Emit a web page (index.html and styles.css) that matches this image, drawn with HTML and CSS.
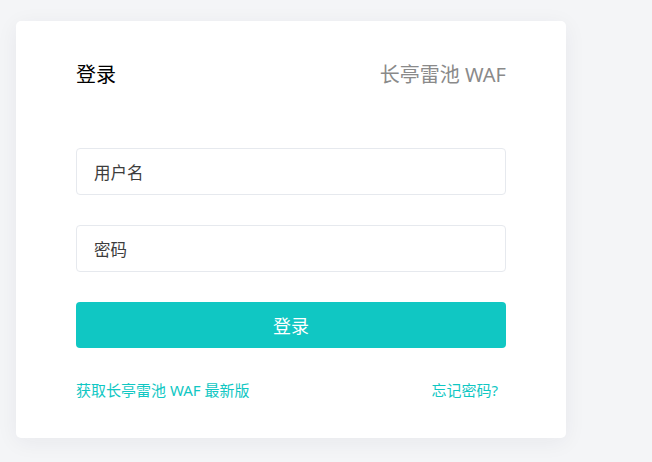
FILE: index.html
```html
<!DOCTYPE html>
<html lang="zh-CN">
<head>
<meta charset="utf-8">
<title>登录 - 长亭雷池 WAF</title>
<link rel="stylesheet" href="styles.css">
</head>
<body>
<div class="page">
  <div class="card">
    <div class="card-head">
      <span class="title">登录</span>
      <span class="brand">长亭雷池 WAF</span>
    </div>
    <form class="form">
      <input class="field" type="text" placeholder="用户名">
      <input class="field" type="password" placeholder="密码">
      <button class="submit" type="button">登录</button>
    </form>
    <div class="links">
      <a class="link" href="#">获取长亭雷池 WAF 最新版</a>
      <a class="link" href="#">忘记密码?</a>
    </div>
  </div>
</div>
</body>
</html>
```
FILE: styles.css
```css
* { box-sizing: border-box; }
html, body {
  margin: 0;
  height: 100%;
}
body {
  background: #f4f5f7;
  font-family: "Noto Sans", "Noto Sans CJK SC", sans-serif;
  color: #000;
}
.page {
  padding: 21px 16px;
}
.card {
  width: 550px;
  background: #fff;
  border-radius: 5px;
  box-shadow: 0 4px 22px rgba(30, 40, 60, 0.06);
  padding: 40px 60px 38px;
}
.card-head {
  display: flex;
  justify-content: space-between;
  align-items: center;
  height: 28px;
  font-size: 20px;
  line-height: 28px;
}
.title { color: #000; }
.brand { color: #8a8a8a; }
.form {
  margin-top: 59px;
  display: flex;
  flex-direction: column;
  gap: 30px;
}
.field {
  height: 47px;
  width: 100%;
  border: 1px solid #e6e9ee;
  border-radius: 4px;
  padding: 2px 17px 0;
  font-family: inherit;
  font-size: 16.5px;
  color: #333;
  outline: none;
  background: #fff;
}
.field::placeholder { color: #3c3c3c; opacity: 1; }
.submit {
  height: 46px;
  width: 100%;
  border: none;
  border-radius: 4px;
  background: #10c7c3;
  color: #fff;
  font-family: inherit;
  font-size: 18px;
  cursor: pointer;
}
.links {
  margin-top: 32px;
  display: flex;
  justify-content: space-between;
  align-items: center;
  height: 20px;
  padding-right: 8px;
}
.link {
  color: #10c7c3;
  text-decoration: none;
  font-size: 15px;
  line-height: 20px;
}
```
